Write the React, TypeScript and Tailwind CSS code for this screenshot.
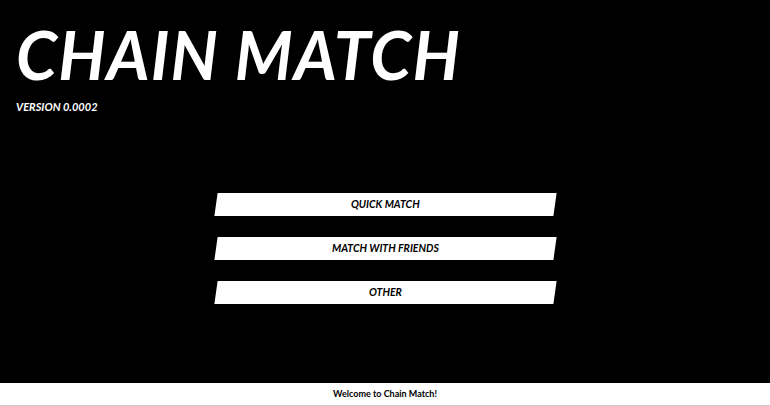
const menu = ["QUICK MATCH", "MATCH WITH FRIENDS", "OTHER"];

const font = { fontFamily: 'Lato, "Noto Sans", sans-serif' };

export default function App() {
  return (
    <div className="h-[406px] w-full bg-black flex flex-col text-white" style={font}>
      <header className="px-[16px] pt-[13px]">
        <h1 className="text-[66px] leading-[84px] font-bold italic tracking-[1.2px]">CHAIN MATCH</h1>
        <p className="mt-[4px] text-[11px] leading-[11px] font-bold italic">VERSION 0.0002</p>
      </header>

      <main className="flex-1 flex flex-col items-center gap-[21px] pt-[81px]">
        {menu.map((label) => (
          <button
            key={label}
            className="w-[339px] h-[23px] bg-white text-black -skew-x-[8deg] flex items-center justify-center"
          >
            <span className="skew-x-[8deg] text-[10.5px] font-bold italic">{label}</span>
          </button>
        ))}
      </main>

      <footer className="h-[23px] bg-white border-b border-[#c8c8c8] flex items-center justify-center">
        <span className="text-[9px] font-bold text-black">Welcome to Chain Match!</span>
      </footer>
    </div>
  );
}
